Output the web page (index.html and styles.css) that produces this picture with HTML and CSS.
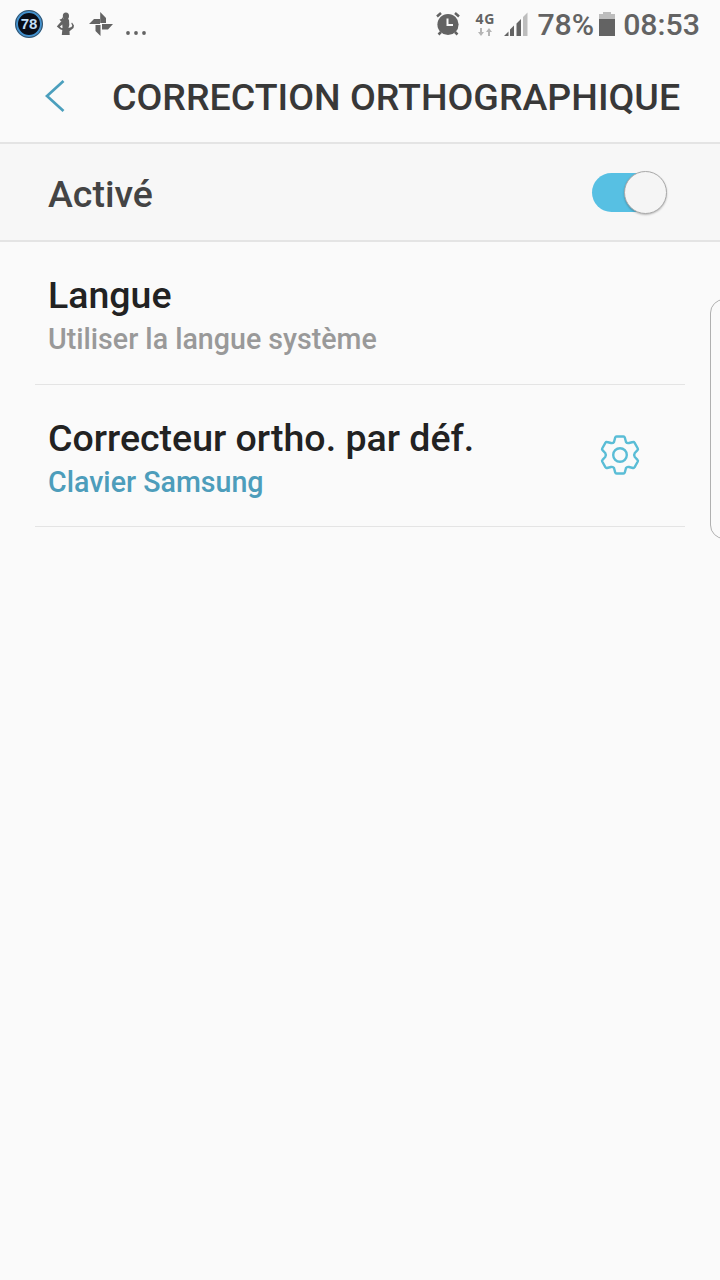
FILE: index.html
```html
<!DOCTYPE html>
<html lang="fr">
<head>
  <meta charset="UTF-8">
  <title>Correction orthographique</title>
  <link rel="stylesheet" href="styles.css">
</head>
<body>
  <div class="status-bar">
    <div class="notifications">
      <div class="battery-badge">78</div>
      <svg class="icon-health" width="20" height="26" viewBox="0 0 20 26">
        <ellipse cx="9.900" cy="4.900" rx="3.100" ry="3.500"/>
        <path d="M8.500 7H11.500L13 9L13.300 14L12.500 17L15.500 16L16.300 14.500L15.300 12.500L16 11.500L18 14.500L17.500 17L13.500 20.300L13.700 24H5.800L6.300 19L4.500 18.500L0.800 15.500L2.500 13.500L6.500 9Z"/>
        <path d="M7 6L5.500 8L3.500 8.500L5 10.500L8 9Z"/>
        <path class="gap" d="M3.800 15.700L6.300 13.500L6.500 16.800L6 17.200Z"/>
      </svg>
      <svg class="icon-pinwheel" width="24" height="24" viewBox="-12 -12 24 24">
        <path d="M-0.800 -1V-12L5 -6V-1ZM1 0H12L7 5.500H1ZM-0.500 1V12L-5.500 7V1ZM-1 0H-12L-7 -5H-1Z"/>
      </svg>
      <svg class="icon-more" width="22" height="4" viewBox="0 0 22 4">
        <circle cx="2" cy="2" r="1.900"/>
        <circle cx="10" cy="2" r="1.900"/>
        <circle cx="18" cy="2" r="1.900"/>
      </svg>
    </div>
    <div class="system">
      <svg class="icon-alarm" width="24" height="24" viewBox="0 0 24 24">
        <circle cx="12" cy="12.500" r="10.600"/>
        <path class="legs" d="M5 20L2.500 22.500M19 20L21.500 22.500M1 4.500L5 1M23 4.500L19 1"/>
        <path class="hands" d="M11.500 6.500V13H17"/>
      </svg>
      <div class="network">
        <span>4G</span>
        <svg width="14" height="8" viewBox="0 0 14 8">
          <path d="M2 0H4V4H6L3 8L0 4H2ZM11 0L14 4H12V8H10V4H8Z"/>
        </svg>
      </div>
      <svg class="icon-signal" width="24" height="24" viewBox="0 0 24 24">
        <path d="M0 24L4.500 19.500V24ZM6 24V17.500L10 13.500V24ZM12.500 24V11.500L17 7V24Z"/>
        <path class="weak" d="M19 24V5L23.500 0.500V24Z"/>
      </svg>
      <span class="percent">78%</span>
      <svg class="icon-battery" width="16" height="24" viewBox="0 0 16 24">
        <path class="weak" d="M0 2H4V0H12V2H16V7H0Z"/>
        <path d="M0 7H16V24H0Z"/>
      </svg>
      <span class="clock">08:53</span>
    </div>
  </div>

  <div class="header">
    <svg class="back" width="20" height="34" viewBox="0 0 20 34">
      <path d="M18.500 2L2 17L18.500 32"/>
    </svg>
    <h1>CORRECTION ORTHOGRAPHIQUE</h1>
  </div>

  <div class="switch-row">
    <span class="switch-label">Activé</span>
    <div class="switch"><div class="knob"></div></div>
  </div>

  <div class="list">
    <div class="item">
      <div>
        <div class="item-title">Langue</div>
        <div class="item-text">Utiliser la langue système</div>
      </div>
    </div>
    <div class="item">
      <div>
        <div class="item-title">Correcteur ortho. par déf.</div>
        <div class="item-text active">Clavier Samsung</div>
      </div>
      <svg class="gear" width="42" height="42" viewBox="-21 -21 42 42">
        <path d="M-3.500 -18.500H3.500Q4.500 -18.500 4.800 -17.500L6 -13Q7 -11.500 9 -12L13 -13Q14 -13.300 14.500 -12.300L17.800 -6.500Q18.300 -5.500 17.500 -4.800L14.800 -2Q13.500 0 14.800 2L17.500 4.800Q18.300 5.500 17.800 6.500L14.500 12.300Q14 13.300 13 13L9 12Q7 11.500 6 13L4.800 17.500Q4.500 18.500 3.500 18.500H-3.500Q-4.500 18.500 -4.800 17.500L-6 13Q-7 11.500 -9 12L-13 13Q-14 13.300 -14.500 12.300L-17.800 6.500Q-18.300 5.500 -17.500 4.800L-14.800 2Q-13.500 0 -14.800 -2L-17.500 -4.800Q-18.300 -5.500 -17.800 -6.500L-14.500 -12.300Q-14 -13.300 -13 -13L-9 -12Q-7 -11.500 -6 -13L-4.800 -17.500Q-4.500 -18.500 -3.500 -18.500Z"/>
        <circle cx="0" cy="0" r="6.800"/>
      </svg>
    </div>
  </div>

  <!-- edge panel handle -->
  <div class="edge-handle"></div>
</body>
</html>
```

FILE: styles.css
```css
* {
  box-sizing: border-box;
}

body {
  font-family: Roboto, sans-serif;
  font-weight: 500;
  margin: 0;
  height: 1280px;
  position: relative;
  overflow: hidden;
  background-color: #fafafa;
}

svg {
  display: block;
  flex: none;
}

.status-bar {
  height: 50px;
  padding: 0 20px 0 15px;
  display: flex;
  justify-content: space-between;
  color: #636363;
  fill: #636363;
}

.notifications,
.system {
  display: flex;
  align-items: center;
  height: 48px;
}

.battery-badge {
  width: 28px;
  height: 28px;
  border: 3px solid #4292d0;
  border-radius: 50%;
  outline: 1px solid #40505e;
  outline-offset: -1px;
  background-color: #080d18;
  color: #c3def5;
  font: bold 15px/22px "Liberation Sans", sans-serif;
  text-align: center;
}

.icon-health {
  margin-left: 13px;
}

.icon-health .gap {
  fill: #fafafa;
}

.icon-pinwheel {
  margin-left: 13px;
}

.icon-more {
  margin: 18px 0 0 13px;
}

.icon-alarm .legs {
  stroke: #636363;
  stroke-width: 2.5;
}

.icon-alarm .hands {
  fill: none;
  stroke: #fafafa;
  stroke-width: 2;
}

.network {
  width: 22px;
  margin: 0 0 2px 14px;
  display: flex;
  flex-direction: column;
  align-items: center;
  font: bold 14px/16px "Open Sans", sans-serif;
  letter-spacing: 0.8px;
}

.network svg {
  margin-top: 1px;
  fill: #b5b5b5;
}

.icon-signal {
  margin-left: 8px;
}

.weak {
  fill: #bdbdbd;
}

.percent,
.clock {
  font-size: 30.3px;
  line-height: 48px;
  padding-top: 1px;
}

.percent {
  margin-left: 9px;
}

.icon-battery {
  margin: 0 8px 0 5px;
}

.header {
  height: 94px;
  padding-left: 45px;
  display: flex;
  align-items: center;
  border-bottom: 2px solid #e4e4e4;
}

.back path {
  fill: none;
  stroke: #4b9fbd;
  stroke-width: 2.7;
}

h1 {
  margin: 2px 0 0 47px;
  font-size: 37.5px;
  font-weight: 500;
  line-height: 44px;
  white-space: nowrap;
  color: #383838;
}

.switch-row {
  height: 98px;
  padding: 0 53px 0 48px;
  display: flex;
  align-items: center;
  justify-content: space-between;
  background-color: #f7f7f7;
  border-bottom: 2px solid #e4e4e4;
}

.switch-label {
  padding-top: 3px;
  font-size: 37.5px;
  line-height: 44px;
  color: #444;
}

.switch {
  width: 75px;
  height: 39px;
  display: flex;
  align-items: center;
  justify-content: flex-end;
  border-radius: 20px;
  background: linear-gradient(to right, #57c0e3 52px, transparent 52px);
}

.knob {
  flex: none;
  width: 43px;
  height: 43px;
  border: 1px solid #aaa;
  border-radius: 50%;
  background-color: #f5f5f5;
  box-shadow: 0 1px 2px rgba(0, 0, 0, 0.25);
}

.list {
  padding: 0 35px;
}

.item {
  height: 142.5px;
  padding: 31px 44px 0 13px;
  display: flex;
  justify-content: space-between;
  border-bottom: 1.5px solid #e4e4e4;
}

.item-title {
  font-size: 37.5px;
  line-height: 44px;
  color: #222;
}

.item-text {
  font-size: 28.6px;
  line-height: 34px;
  margin-top: 5px;
  color: #999;
}

.item-text.active {
  color: #4d9dbb;
}

.gear {
  margin-top: 18.5px;
  fill: none;
  stroke: #5abdd6;
  stroke-width: 2.4;
  stroke-linejoin: round;
}

.edge-handle {
  position: absolute;
  top: 299px;
  right: -20px;
  width: 30px;
  height: 240px;
  border: 1px solid #b0b0b0;
  border-radius: 14px;
}
```
